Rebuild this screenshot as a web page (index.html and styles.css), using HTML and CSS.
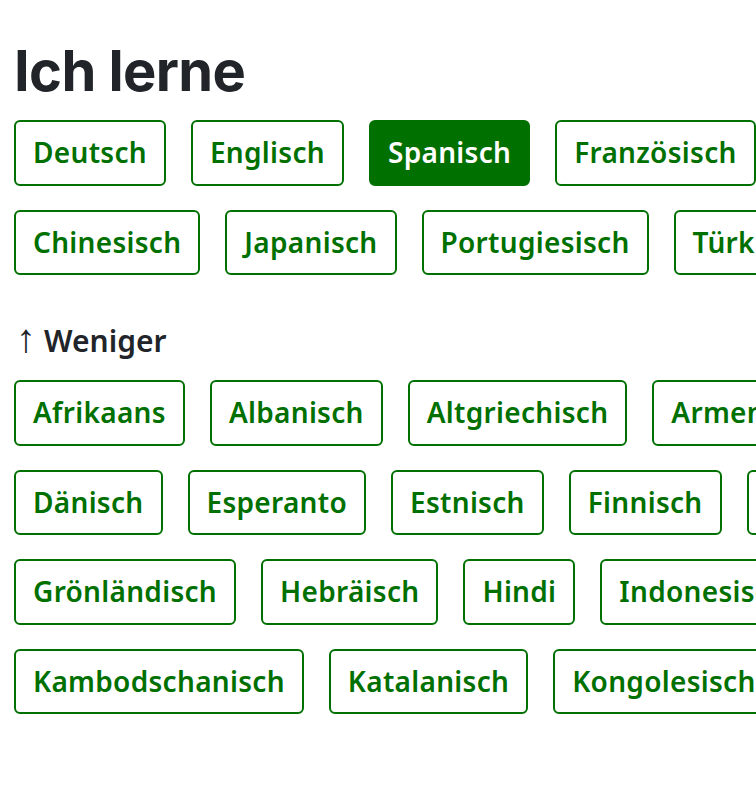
FILE: index.html
```html
<!DOCTYPE html>
<html lang="de">
<head>
<meta charset="utf-8">
<title>Ich lerne</title>
<link rel="stylesheet" href="styles.css">
</head>
<body>
<main class="page">
  <h1 class="title">Ich lerne</h1>
  <div class="langs">
    <div class="row">
      <button class="lang">Deutsch</button>
      <button class="lang">Englisch</button>
      <button class="lang active">Spanisch</button>
      <button class="lang">Französisch</button>
      <button class="lang">Italienisch</button>
    </div>
    <div class="row">
      <button class="lang">Chinesisch</button>
      <button class="lang">Japanisch</button>
      <button class="lang">Portugiesisch</button>
      <button class="lang">Türkisch</button>
      <button class="lang">Russisch</button>
    </div>
  </div>
  <h2 class="less"><span class="arrow">↑</span> Weniger</h2>
  <div class="langs">
    <div class="row">
      <button class="lang">Afrikaans</button>
      <button class="lang">Albanisch</button>
      <button class="lang">Altgriechisch</button>
      <button class="lang">Armenisch</button>
      <button class="lang">Bulgarisch</button>
    </div>
    <div class="row">
      <button class="lang">Dänisch</button>
      <button class="lang">Esperanto</button>
      <button class="lang">Estnisch</button>
      <button class="lang">Finnisch</button>
      <button class="lang">Georgisch</button>
    </div>
    <div class="row">
      <button class="lang">Grönländisch</button>
      <button class="lang">Hebräisch</button>
      <button class="lang">Hindi</button>
      <button class="lang">Indonesisch</button>
      <button class="lang">Irisch</button>
    </div>
    <div class="row">
      <button class="lang">Kambodschanisch</button>
      <button class="lang">Katalanisch</button>
      <button class="lang">Kongolesisch</button>
      <button class="lang">Koreanisch</button>
    </div>
  </div>
</main>
</body>
</html>
```
FILE: styles.css
```css
html, body {
  margin: 0;
  padding: 0;
  background: #ffffff;
  overflow: hidden;
}
.page {
  padding: 36px 0 0 14px;
  font-family: "Noto Sans", "Open Sans", sans-serif;
  color: #212529;
  width: 1400px;
}
.title {
  margin: 0 0 14px 0;
  font-family: "Inter", "Noto Sans", sans-serif;
  font-weight: 700;
  font-size: 56px;
  line-height: 70px;
  letter-spacing: -0.6px;
  color: #212529;
}
.langs {
  display: flex;
  flex-direction: column;
  gap: 24px;
}
.row {
  display: flex;
  gap: 25px;
}
.lang {
  flex: none;
  font-family: "Noto Sans", "Open Sans", sans-serif;
  font-weight: 600;
  font-size: 28px;
  line-height: 41.5px;
  letter-spacing: 0.3px;
  padding: 10px 17px;
  border: 2px solid #007000;
  border-radius: 6px;
  background: #ffffff;
  color: #007000;
}
.lang.active {
  background: #007000;
  color: #ffffff;
}
.less {
  margin: 43px 0 19px 0;
  font-size: 30px;
  font-weight: 600;
  line-height: 40px;
  color: #212529;
  display: flex;
  align-items: baseline;
  gap: 8px;
}
.arrow {
  font-family: "Liberation Sans", sans-serif;
  font-weight: 400;
  font-size: 40px;
  line-height: 40px;
  margin-left: 2px;
}
```
